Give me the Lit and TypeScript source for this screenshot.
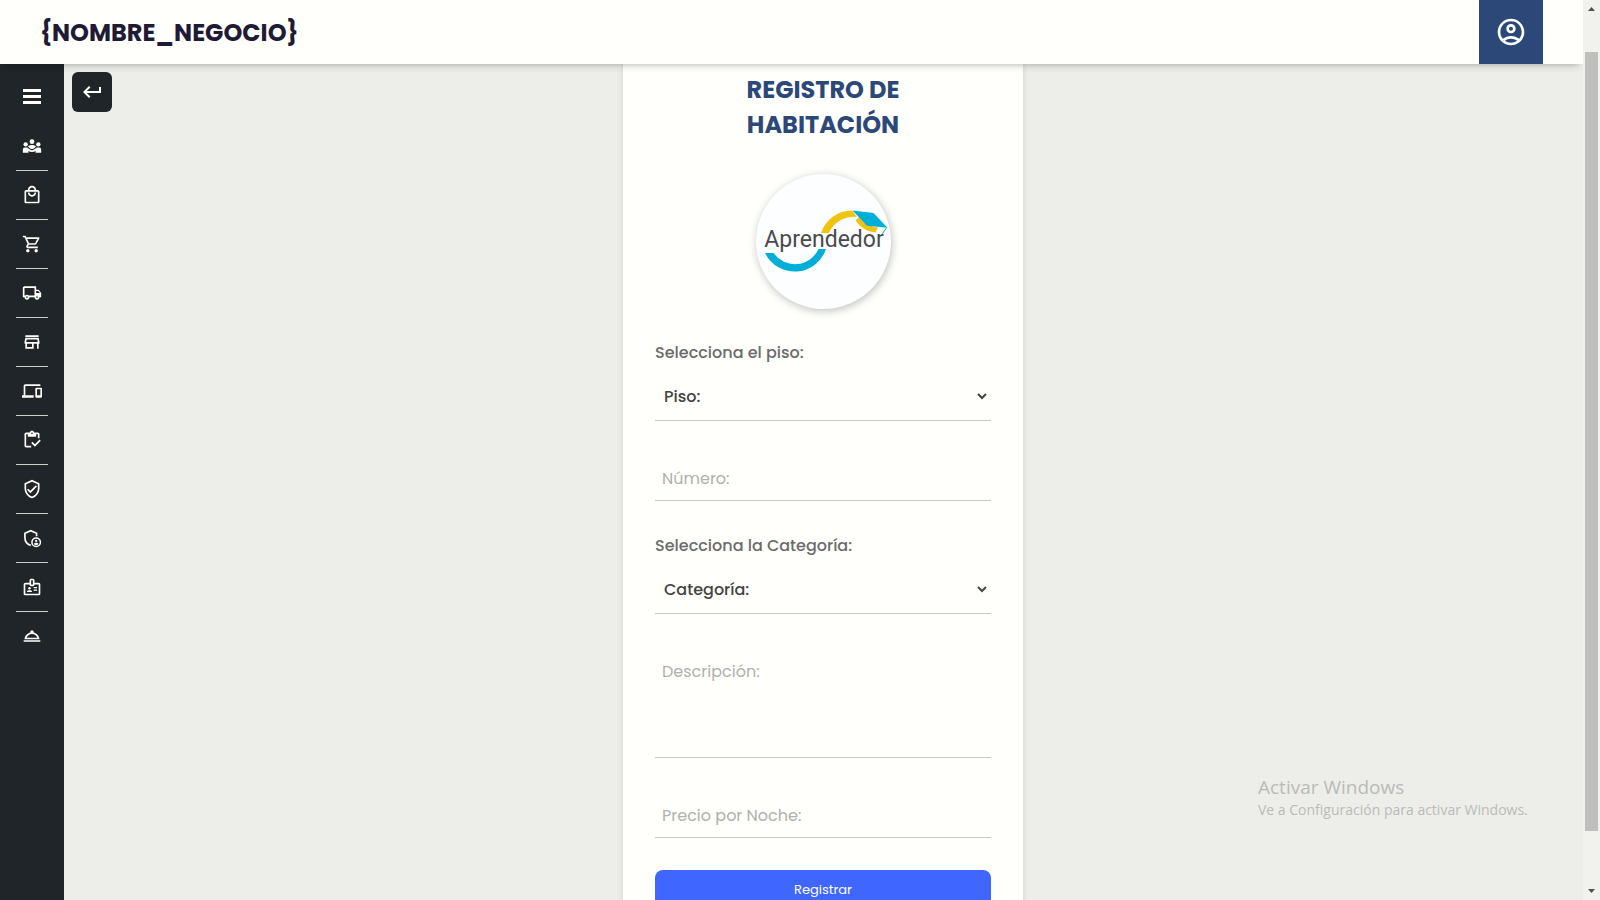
import { LitElement, html, css, svg } from "lit";
import { customElement } from "lit/decorators.js";

const bar = [
  {
    name: "Clientes",
    icon: svg`<circle cx="12" cy="6.800" r="2.900"/><circle cx="4.400" cy="10" r="2.600"/><circle cx="19.600" cy="10" r="2.600"/><path d="M1 20v-3.600c0-1.500 1-2.600 2.500-2.600h2.200c.8 0 1.400.4 1.900 1 1 1.400 2.600 2.200 4.400 2.200s3.400-.8 4.400-2.200c.5-.6 1.100-1 1.900-1h2.200c1.500 0 2.500 1.100 2.500 2.600V20h-6.700v-2.100c-1.200.8-2.700 1.300-4.300 1.300s-3.100-.5-4.300-1.300V20H1z"/><path d="M7 12.500c1.300-1.200 3-1.800 5-1.800s3.700.6 5 1.800c-.7.300-1.300.9-1.700 1.500-.8 1-2 1.600-3.300 1.600s-2.500-.6-3.300-1.600c-.4-.6-1-1.200-1.700-1.500z"/>`,
  },
  {
    name: "Productos",
    icon: svg`<path d="M19 6h-2c0-2.760-2.240-5-5-5S7 3.240 7 6H5c-1.100 0-2 .9-2 2v12c0 1.100.9 2 2 2h14c1.100 0 2-.9 2-2V8c0-1.100-.9-2-2-2zm-7-3c1.660 0 3 1.340 3 3H9c0-1.660 1.340-3 3-3zm7 17H5V8h14v12zm-7-8c-1.660 0-3-1.340-3-3H7c0 2.760 2.240 5 5 5s5-2.240 5-5h-2c0 1.660-1.340 3-3 3z"/>`,
  },
  {
    name: "Ventas",
    icon: svg`<path d="M15.550 13c.75 0 1.410-.41 1.750-1.030l3.580-6.490c.37-.66-.11-1.480-.87-1.480H5.210l-.94-2H1v2h2l3.600 7.590-1.350 2.440C4.520 15.370 5.480 17 7 17h12v-2H7l1.100-2h7.450zM6.160 6h12.150l-2.760 5H8.530L6.160 6zM7 18c-1.100 0-1.990.9-1.990 2S5.900 22 7 22s2-.9 2-2-.9-2-2-2zm10 0c-1.100 0-1.990.9-1.990 2s.89 2 1.990 2 2-.9 2-2-.9-2-2-2z"/>`,
  },
  {
    name: "Proveedores",
    icon: svg`<path d="M20 8h-3V4H3c-1.100 0-2 .9-2 2v11h2c0 1.660 1.340 3 3 3s3-1.340 3-3h6c0 1.660 1.340 3 3 3s3-1.340 3-3h2v-5l-3-4zm-.5 1.500l1.960 2.500H17V9.500h2.500zM6 18c-.55 0-1-.45-1-1s.45-1 1-1 1 .45 1 1-.45 1-1 1zm2.220-3c-.55-.61-1.330-1-2.220-1s-1.670.39-2.220 1H3V6h12v9H8.220zM18 18c-.55 0-1-.45-1-1s.45-1 1-1 1 .45 1 1-.45 1-1 1z"/>`,
  },
  {
    name: "Tienda",
    icon: svg`<path d="M18.360 9l.6 3H5.040l.6-3h12.720M20 4H4v2h16V4zm0 3H4l-1 5v2h1v6h10v-6h4v6h2v-6h1v-2l-1-5zM6 18v-4h6v4H6z"/>`,
  },
  {
    name: "Dispositivos",
    icon: svg`<path d="M4 6h18V4H4c-1.100 0-2 .9-2 2v11H0v3h14v-3H4V6zm19 2h-6c-.55 0-1 .45-1 1v10c0 .55.45 1 1 1h6c.55 0 1-.45 1-1V9c0-.55-.45-1-1-1zm-1 9h-4v-7h4v7z"/>`,
  },
  {
    name: "Inventario",
    icon: svg`<path d="M5 5h2v3h10V5h2v5h2V5c0-1.100-.9-2-2-2h-4.180C14.400 1.840 13.300 1 12 1s-2.400.84-2.820 2H5c-1.100 0-2 .9-2 2v14c0 1.100.9 2 2 2h6v-2H5V5zm7-2c.55 0 1 .45 1 1s-.45 1-1 1-1-.45-1-1 .45-1 1-1z"/><path d="M21 11.500 15.510 17l-3.010-3L11 15.500l4.510 4.500L22.500 13z"/>`,
  },
  {
    name: "Permisos",
    icon: svg`<path d="M12 1L3 5v6c0 5.550 3.840 10.740 9 12 5.160-1.260 9-6.450 9-12V5l-9-4zm7 10c0 4.520-2.980 8.690-7 9.930-4.020-1.240-7-5.410-7-9.930V6.300l7-3.110 7 3.110V11zm-11.590.59L6 13l4 4 8-8-1.410-1.420L10 14.170z"/>`,
  },
  {
    name: "Administradores",
    icon: svg`<path d="M17.500 10V6.300L10.500 3.300l-7 3v5.200c0 4.300 2.900 8.200 7 9.400" fill="none" stroke="currentColor" stroke-width="2"/><circle cx="17" cy="17" r="5.100" fill="none" stroke="currentColor" stroke-width="1.800"/><circle cx="17" cy="15.400" r="1.400"/><path d="M14.200 19.200c.5-1 1.600-1.600 2.800-1.600s2.300.6 2.800 1.600c-.6.800-1.600 1.300-2.800 1.300s-2.200-.5-2.800-1.300z"/>`,
  },
  {
    name: "Empleados",
    icon: svg`<path d="M20 7h-5V4c0-1.100-.9-2-2-2h-2c-1.100 0-2 .9-2 2v3H4c-1.100 0-2 .9-2 2v11c0 1.100.9 2 2 2h16c1.100 0 2-.9 2-2V9c0-1.100-.9-2-2-2zM11 4h2v5h-2V4zm9 16H4V9h5c0 1.100.9 2 2 2h2c1.100 0 2-.9 2-2h5v11z"/><circle cx="9" cy="13.500" r="1.500"/><path d="M11.080 16.180c-.64-.28-1.340-.43-2.080-.43s-1.440.15-2.080.43c-.56.24-.92.78-.92 1.390V18h6v-.43c0-.61-.36-1.150-.92-1.390zM14 15h4v1.500h-4zM14 12h4v1.500h-4z"/>`,
  },
  {
    name: "Habitaciones",
    icon: svg`<path d="M2 17h20v2H2v-2zm11.840-9.210c.1-.24.16-.51.16-.79 0-1.100-.9-2-2-2s-2 .9-2 2c0 .28.06.55.16.79C6.250 8.600 3.270 11.930 3 16h18c-.27-4.070-3.250-7.400-7.160-8.210zM12 9.580c2.950 0 5.470 1.830 6.500 4.410h-13c1.030-2.580 3.550-4.410 6.500-4.410z"/>`,
  },
];

@customElement("app-root")
export class AppRoot extends LitElement {
  static styles = css`
    :host {
      display: grid;
      grid-template-columns: 1fr 17px;
      height: 100vh;
      overflow: hidden;
      background: #edeeea;
      font-family: Poppins, Inter, "Open Sans", sans-serif;
      font-size: 16px;
      color: #333;
    }
    * {
      box-sizing: border-box;
    }
    button,
    input,
    select,
    textarea {
      font: inherit;
      margin: 0;
    }
    svg {
      display: block;
      fill: currentColor;
    }
    .page {
      display: flex;
      flex-direction: column;
      min-width: 0;
      min-height: 0;
      overflow: hidden;
    }
    .header {
      z-index: 1;
      display: flex;
      flex: none;
      align-items: center;
      justify-content: space-between;
      height: 64px;
      padding: 0 40px;
      background: #fffffc;
      box-shadow: 0 4px 8px -4px rgba(0, 0, 0, 0.35);
    }
    .brand {
      font-size: 24px;
      font-weight: 700;
      color: #1f1b35;
    }
    .account {
      display: grid;
      place-items: center;
      width: 64px;
      height: 64px;
      padding: 0;
      border: 0;
      background: #2c4878;
      color: #fffffc;
    }
    .body {
      display: grid;
      grid-template-columns: 64px 1fr;
      flex: 1;
      min-height: 0;
    }
    .sidebar {
      padding-top: 6px;
      background: #202529;
      color: #fffffc;
    }
    .toggle {
      display: grid;
      place-items: center;
      width: 100%;
      height: 52px;
      padding: 0;
      border: 0;
      background: none;
      color: inherit;
    }
    .links {
      margin: 0;
      padding: 0 16px;
      list-style: none;
    }
    .links li + li {
      border-top: 1px solid #cccdc9;
    }
    .links a {
      display: grid;
      place-items: center;
      height: 48px;
      color: inherit;
    }
    .main {
      display: grid;
      grid-template-columns: 40px 1fr 40px;
      padding: 0 9px 0 8px;
      min-height: 0;
    }
    .back {
      display: grid;
      place-items: center;
      width: 40px;
      height: 40px;
      margin-top: 8px;
      padding: 0;
      border: 0;
      border-radius: 6px;
      background: #202529;
      color: #fffffc;
    }
    .card {
      justify-self: center;
      display: flex;
      flex-direction: column;
      width: 400px;
      max-width: 100%;
      padding: 8px 32px 32px;
      background: #fffffc;
      box-shadow: 0 0 6px rgba(0, 0, 0, 0.12);
    }
    .title {
      margin: 0;
      padding: 0 80px;
      font-size: 24px;
      line-height: 35px;
      font-weight: 700;
      text-align: center;
      color: #2c4878;
    }
    .logo {
      align-self: center;
      width: 135px;
      height: 135px;
      margin: 32px 0 31px;
      border-radius: 50%;
      background: #fcfeff;
      box-shadow: 1px 2px 8px rgba(0, 0, 0, 0.25);
    }
    .word {
      font-family: Roboto, sans-serif;
      font-size: 23px;
      fill: #4a4a4c;
    }
    .label {
      padding-top: 1px;
      line-height: 24px;
      font-weight: 500;
      color: #6b6b6b;
    }
    .field {
      width: 100%;
      border: 0;
      border-bottom: 1px solid #c8c9c5;
      border-radius: 0;
      outline: 0;
      background: #fffffc;
      color: #333;
    }
    .pick {
      margin: 7px 0 35px;
      padding-right: 1px;
    }
    .select {
      display: block;
      width: 100%;
      height: 48px;
      padding: 0 5px;
      border: 0;
      outline: 0;
      background: #fffffc;
      font-weight: 500;
      color: #444;
    }
    .input {
      height: 45px;
      margin-bottom: 32px;
      padding: 0 7px;
    }
    .area {
      height: 109px;
      margin-bottom: 35px;
      padding: 11px 7px;
      line-height: 24px;
      resize: none;
    }
    .field::placeholder {
      color: #b0b0ae;
      opacity: 1;
    }
    .submit {
      flex: none;
      height: 40px;
      border: 0;
      border-radius: 8px;
      background: #3f66ff;
      color: #fffffc;
      font-size: 13px;
    }
    .scroll {
      display: grid;
      grid-template-rows: 17px 4fr 89fr 6fr 17px;
      background: #f1f1ee;
      color: #50504e;
    }
    .thumb {
      grid-row: 3;
      margin: 0 2px;
      background: #bfbfbd;
    }
    .down {
      grid-row: 5;
    }
    .notice {
      position: absolute;
      right: 67px;
      bottom: 80px;
      width: 275px;
      font-family: "Open Sans", "Noto Sans", sans-serif;
      color: #babbb8;
      font-size: 14px;
      line-height: 20px;
      white-space: nowrap;
      pointer-events: none;
    }
    .notice strong {
      display: block;
      font-size: 19px;
      line-height: 26px;
      font-weight: 400;
    }
  `;

  render() {
    return html`
      <div class="page">
        <header class="header">
          <span class="brand">{NOMBRE_NEGOCIO}</span>
          <button class="account" type="button" aria-label="Cuenta">
            <svg width="32" height="32" viewBox="0 0 24 24">
              <path fill-rule="evenodd" d="M12 2C6.480 2 2 6.480 2 12s4.480 10 10 10 10-4.480 10-10S17.520 2 12 2zM7.350 18.500C8.660 17.560 10.260 17 12 17s3.340.56 4.650 1.500C15.340 19.440 13.740 20 12 20s-3.340-.56-4.650-1.500zm10.790-1.380C16.450 15.800 14.320 15 12 15s-4.450.8-6.140 2.120C4.700 15.730 4 13.950 4 12c0-4.420 3.580-8 8-8s8 3.580 8 8c0 1.950-.7 3.730-1.860 5.120z"/>
              <path d="M12 6c-1.930 0-3.500 1.570-3.500 3.500S10.070 13 12 13s3.500-1.570 3.500-3.500S13.930 6 12 6zm0 5c-.83 0-1.500-.67-1.500-1.500S11.170 8 12 8s1.500.67 1.500 1.500S12.830 11 12 11z"/>
            </svg>
          </button>
        </header>
        <div class="body">
          <nav class="sidebar">
            <button class="toggle" type="button" aria-label="Menú">
              <svg width="24" height="24" viewBox="0 0 24 24"><path d="M3 5h18v3H3zM3 11h18v3H3zM3 17h18v3H3z"/></svg>
            </button>
            <ul class="links">
              ${bar.map(
                (b) => html`<li>
                  <a href="#" aria-label=${b.name}><svg width="20" height="20" viewBox="0 0 24 24">${b.icon}</svg></a>
                </li>`
              )}
            </ul>
          </nav>
          <main class="main">
            <button class="back" type="button" aria-label="Volver">
              <svg width="24" height="24" viewBox="0 0 24 24"><path d="m9 18-6-6 6-6 1.400 1.400L6.800 11H19V7h2v6H6.800l3.600 3.600z"/></svg>
            </button>
            <form class="card">
              <h1 class="title">REGISTRO DE HABITACIÓN</h1>
              <svg class="logo" viewBox="0 0 135 135" role="img" aria-label="Aprendedor">
                <path d="M65 59A33 33 0 0 1 96 36.500L101 43A27 27 0 0 0 73 59z" fill="#f0c30f"/>
                <path d="M103 43c6 6.500 11 9.500 19 10.500l-2.500 5C111 58 104 53 99.500 46.500z" fill="#f0c30f"/>
                <path d="M96.500 36.500 117.500 39 131.500 53.700 111 51.700z" fill="#00aed8"/>
                <path d="M130.500 54l-3 4-1.500 3" fill="none" stroke="#00aed8" stroke-width="1"/>
                <path d="M9 79h8.500A26 26 0 0 0 62.500 75H70A33 33 0 0 1 9 79z" fill="#00aed8"/>
                <text class="word" x="68" y="73" text-anchor="middle">Aprendedor</text>
              </svg>
              <label class="label" for="piso">Selecciona el piso:</label>
              <div class="field pick">
                <select class="select" id="piso">
                  <option>Piso:</option>
                </select>
              </div>
              <input class="field input" type="text" placeholder="Número:" aria-label="Número" />
              <label class="label" for="categoria">Selecciona la Categoría:</label>
              <div class="field pick">
                <select class="select" id="categoria">
                  <option>Categoría:</option>
                </select>
              </div>
              <textarea class="field area" placeholder="Descripción:" aria-label="Descripción"></textarea>
              <input class="field input" type="text" placeholder="Precio por Noche:" aria-label="Precio por Noche" />
              <button class="submit" type="button">Registrar</button>
            </form>
          </main>
        </div>
      </div>
      <div class="scroll" aria-hidden="true">
        <svg class="up" width="17" height="17" viewBox="0 0 17 17"><path d="M5 11h7L8.500 7z"/></svg>
        <div class="thumb"></div>
        <svg class="down" width="17" height="17" viewBox="0 0 17 17"><path d="M5 6h7L8.500 10z"/></svg>
      </div>
      <aside class="notice"><strong>Activar Windows</strong>Ve a Configuración para activar Windows.</aside>
    `;
  }
}
